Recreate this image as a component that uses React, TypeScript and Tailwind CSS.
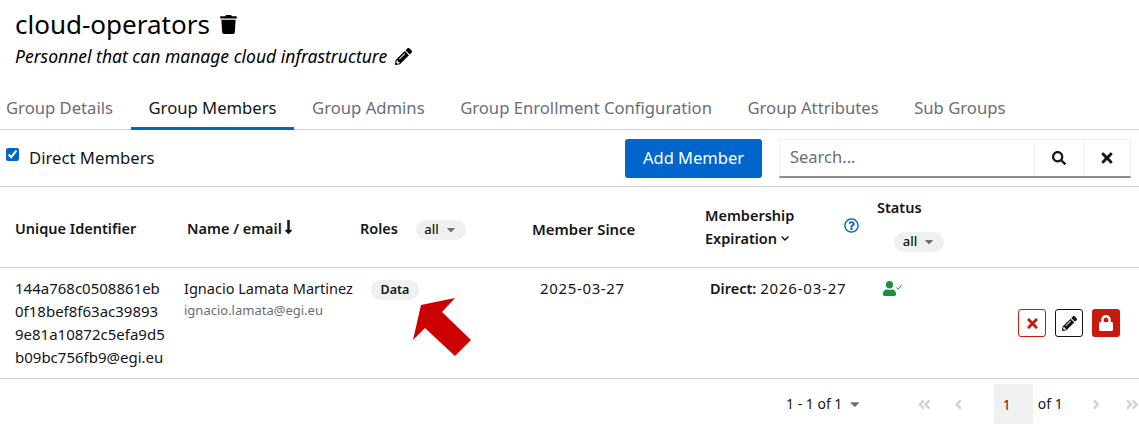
import { FaTrash, FaPencilAlt, FaSearch, FaTimes, FaLock, FaUser, FaAngleDoubleLeft, FaAngleLeft, FaAngleRight, FaAngleDoubleRight, FaLongArrowAltDown, FaChevronDown, FaRegQuestionCircle, FaCaretDown } from "react-icons/fa";

function Chip({ label }: { label: string }) {
  return (
    <span className="inline-flex h-[20px] w-[50px] items-center justify-center gap-[6px] rounded-full bg-[#f0f0f0] text-[13px] font-medium text-[#151515]">
      {label}
      <FaCaretDown className="h-[13px] w-[12px] text-[#6a6e73]" />
    </span>
  );
}

const tabs = ["Group Details", "Group Members", "Group Admins", "Group Enrollment Configuration", "Group Attributes", "Sub Groups"];

export default function App() {
  return (
    <div className="relative h-[424px] w-[1139px] overflow-hidden bg-white font-['Noto_Sans',sans-serif] text-[#151515]">
      <header className="h-[86px] pl-[15px] pt-[6px]">
        <div className="flex h-[36px] items-center gap-[10px]">
          <h1 className="text-[26px] font-normal leading-[36px] text-black">cloud-operators</h1>
          <FaTrash className="h-[19px] w-[17px] text-black" />
        </div>
        <div className="flex h-[28px] items-center gap-[8px]">
          <p className="text-[17.5px] italic text-black">Personnel that can manage cloud infrastructure</p>
          <FaPencilAlt className="h-[17px] w-[17px] text-black" />
        </div>
      </header>

      <nav className="flex h-[44px] border-b border-[#d2d2d2] text-[16.65px]">
        {tabs.map((t, i) => (
          <div key={t} className={`flex h-[44px] items-center px-[17.75px] first:pl-[6px] ${i === 1 ? "border-b-[3px] border-[#0066cc] pt-[3px] text-[#151515]" : "text-[#6a6e73]"}`}>
            {t}
          </div>
        ))}
      </nav>

      <div className="flex h-[57px] items-center border-b border-[#d2d2d2] pl-[6px] pr-[8px]">
        <label className="flex flex-1 items-center gap-[10px] text-[16.7px]">
          <input type="checkbox" defaultChecked className="mb-[6px] h-[13px] w-[13px] accent-[#0066cc]" />
          Direct Members
        </label>
        <button className="mr-[17px] h-[39px] w-[137px] rounded-[3px] bg-[#0066cc] text-[16.5px] text-white">Add Member</button>
        <div className="flex h-[39px] w-[352px] border border-b-2 border-[#f0f0f0] border-b-[#8a8d90]">
          <div className="flex flex-1 items-center pl-[10px] text-[16.5px] text-[#6a6e73]">Search...</div>
          <div className="flex w-[49px] items-center justify-center border-l border-[#f0f0f0]"><FaSearch className="h-[14px] w-[14px] text-[#151515]" /></div>
          <div className="flex w-[47px] items-center justify-center border-l border-[#f0f0f0]"><FaTimes className="h-[16px] w-[14px] text-[#151515]" /></div>
        </div>
      </div>

      <div className="flex h-[81px] border-b border-[#d2d2d2] text-[14.5px] font-semibold">
        <div className="w-[187px] pl-[15px] pt-[31px]">Unique Identifier</div>
        <div className="flex w-[173px] items-start gap-[2px] pt-[31px]">Name / email<FaLongArrowAltDown className="mt-[1px] h-[16px] w-[9px]" /></div>
        <div className="flex w-[172px] items-start gap-[17.5px] pt-[31px]">Roles<span className="font-normal"><Chip label="all" /></span></div>
        <div className="w-[173px] pt-[31px] text-[14.9px]">Member Since</div>
        <div className="w-[172px] pt-[17px] leading-[23px]">
          <div className="relative">Membership<FaRegQuestionCircle className="absolute left-[139px] top-[14px] h-[15px] w-[15px] text-[#0066cc]" /></div>
          <div className="flex items-center gap-[3px]">Expiration<FaChevronDown className="h-[9px] w-[10px]" /></div>
        </div>
        <div className="pt-[9px] leading-[23px]">
          <div>Status</div>
          <div className="mt-[10px] pl-[17px] font-normal"><Chip label="all" /></div>
        </div>
      </div>

      <div className="flex h-[111px] border-b border-[#d2d2d2] text-[14.5px]">
        <div className="w-[184px] pl-[15px] pt-[9px] text-[15px] leading-[23px]">
          <div>144a768c0508861eb</div>
          <div>0f18bef8f63ac39893</div>
          <div>9e81a10872c5efa9d5</div>
          <div>b09bc756fb9@egi.eu</div>
        </div>
        <div className="w-[187px] pt-[9px] leading-[23px]">
          <div>Ignacio Lamata Martinez</div>
          <div className="text-[13px] leading-[20px] text-[#6a6e73]">ignacio.lamata@egi.eu</div>
        </div>
        <div className="w-[169px] pt-[10px]">
          <span className="inline-flex h-[20px] w-[48px] items-center justify-center rounded-full bg-[#f0f0f0] text-[12.5px] font-semibold">Data</span>
        </div>
        <div className="w-[170px] pt-[9px] text-[15px] leading-[23px] tracking-[0.65px]">2025-03-27</div>
        <div className="w-[173px] pt-[9px] leading-[23px]"><span className="font-semibold">Direct:</span> <span className="text-[15px] tracking-[0.8px]">2026-03-27</span></div>
        <div className="flex items-start pt-[13px] text-[#1e8f3e]">
          <FaUser className="h-[15px] w-[13px]" />
          <svg className="mt-[2px] h-[8px] w-[6px]" viewBox="0 0 6 8" fill="none" stroke="currentColor" strokeWidth="1"><path d="M0.5 4.5 L2.2 6.2 L5.6 2" /></svg>
        </div>
        <div className="ml-auto mr-[19px] mt-[41px] flex h-[28px] gap-[9px]">
          <div className="flex w-[28px] items-center justify-center rounded-[3px] border border-[#c9190b]"><FaTimes className="h-[15px] w-[13px] text-[#c9190b]" /></div>
          <div className="flex w-[28px] items-center justify-center rounded-[3px] border border-[#151515]"><FaPencilAlt className="h-[15px] w-[15px] text-[#151515]" /></div>
          <div className="flex w-[28px] items-center justify-center rounded-[3px] bg-[#c9190b]"><FaLock className="h-[16px] w-[14px] text-white" /></div>
        </div>
      </div>

      <div className="flex h-[45px] items-center pt-[5px] text-[14px]">
        <div className="ml-[786px] mb-[1px] w-[52px] whitespace-nowrap">1 - 1 of 1</div>
        <FaCaretDown className="ml-[12px] h-[14px] w-[10px] text-[#6a6e73]" />
        <FaAngleDoubleLeft className="ml-[57px] h-[15px] w-[15px] text-[#d2d2d2]" />
        <FaAngleLeft className="ml-[23px] h-[15px] w-[9px] text-[#d2d2d2]" />
        <div className="ml-[31px] flex h-[40px] w-[40px] items-center bg-[#f0f0f0] pl-[9px] text-[#7d1007]">1</div>
        <div className="ml-[5px] mb-[1px] w-[24px] whitespace-nowrap">of 1</div>
        <FaAngleRight className="ml-[30px] h-[15px] w-[9px] text-[#d2d2d2]" />
        <FaAngleDoubleRight className="ml-[24px] h-[15px] w-[15px] text-[#d2d2d2]" />
      </div>

      <svg className="absolute left-[410px] top-[295px] h-[64px] w-[64px]" viewBox="410 295 64 64">
        <polygon points="455,298 421,305 413,340 425,328 455,356 471,340 442,312" fill="#cc0000" />
      </svg>
    </div>
  );
}
